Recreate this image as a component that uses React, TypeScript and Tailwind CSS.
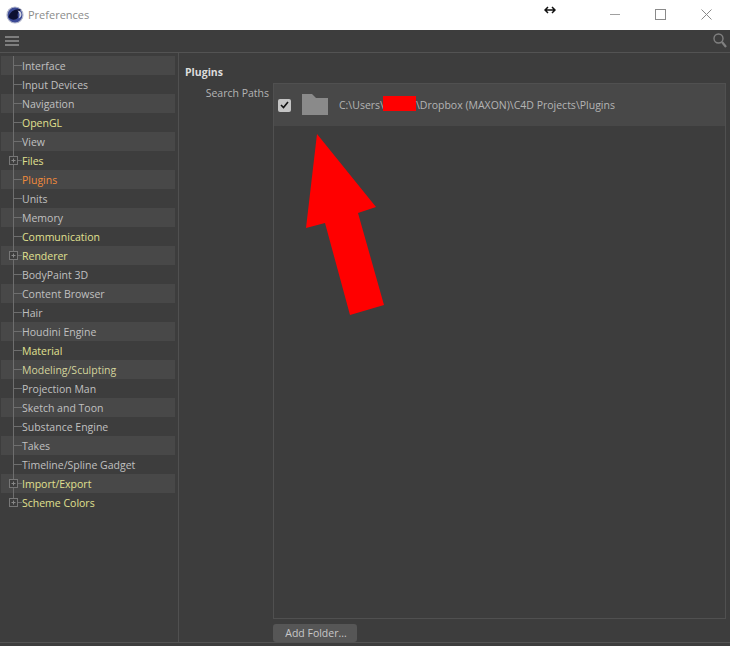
const items: [string, string, boolean?][] = [
  ["Interface", "text-[#c0c0c0]"],
  ["Input Devices", "text-[#c0c0c0]"],
  ["Navigation", "text-[#c0c0c0]"],
  ["OpenGL", "text-[#e0e090]"],
  ["View", "text-[#c0c0c0]"],
  ["Files", "text-[#e0e090]", true],
  ["Plugins", "text-[#f08a3c]"],
  ["Units", "text-[#c0c0c0]"],
  ["Memory", "text-[#c0c0c0]"],
  ["Communication", "text-[#e0e090]"],
  ["Renderer", "text-[#e0e090]", true],
  ["BodyPaint 3D", "text-[#c0c0c0]"],
  ["Content Browser", "text-[#c0c0c0]"],
  ["Hair", "text-[#c0c0c0]"],
  ["Houdini Engine", "text-[#c0c0c0]"],
  ["Material", "text-[#e0e090]"],
  ["Modeling/Sculpting", "text-[#d4d49c]"],
  ["Projection Man", "text-[#c0c0c0]"],
  ["Sketch and Toon", "text-[#c0c0c0]"],
  ["Substance Engine", "text-[#c0c0c0]"],
  ["Takes", "text-[#c0c0c0]"],
  ["Timeline/Spline Gadget", "text-[#c0c0c0]"],
  ["Import/Export", "text-[#e0e090]", true],
  ["Scheme Colors", "text-[#e0e090]", true],
];

function Row({ label, color, plus, striped, last }: { label: string; color: string; plus?: boolean; striped: boolean; last: boolean }) {
  return (
    <div className={`h-[19px] w-[174px] flex items-center text-[10.5px] leading-[19px] whitespace-nowrap ${striped ? "bg-[#484848]" : ""}`}>
      <svg width="21" height="19" viewBox="0 0 21 19" className="shrink-0">
        <path d={last ? "M12.5 0V9.5" : "M12.5 0V19"} stroke="#6e6e6e" fill="none" />
        <path d="M12.5 9.5H21" stroke="#6e6e6e" fill="none" />
        {plus && (
          <>
            <rect x="8.5" y="5.5" width="8" height="8" fill="#3d3d3d" stroke="#777" />
            <path d="M10.5 9.5H14.5M12.5 7.5V11.5" stroke="#888" fill="none" />
          </>
        )}
      </svg>
      <span className={`${color} mt-[2px]`}>{label}</span>
    </div>
  );
}

export default function App() {
  return (
    <div className="relative w-[730px] h-[646px] overflow-hidden flex flex-col bg-[#3d3d3d] font-['Open_Sans','Noto_Sans',sans-serif]">
      <div className="h-[30px] bg-white flex items-center shrink-0">
        <svg width="18" height="18" viewBox="0 0 18 18" className="ml-[6px] -mt-[1px]">
          <circle cx="9" cy="9" r="8" fill="#3c4a96" />
          <circle cx="9" cy="9" r="8" fill="none" stroke="#b4b8cc" strokeWidth="1.2" />
          <path d="M2.5 11C4 5.5 9 2.5 15 3.5 12 5 11 8 12 11.5 9.5 14.5 5.5 14.5 2.5 11Z" fill="#0d1030" />
          <path d="M11.5 4.5A4.5 4.5 0 0 1 15.5 9 4.5 4.5 0 0 1 12.5 12.5 6 6 0 0 0 11.5 4.5Z" fill="#d4d6e0" />
        </svg>
        <span className="ml-[4px] text-[11px] text-[#8b8b8b]">Preferences</span>
        <div className="ml-auto flex items-center -mt-[2px]">
          <div className="w-[10px] h-[1px] bg-[#a0a0a0] mr-[35px]" />
          <div className="w-[11px] h-[11px] border border-[#8a8a8a] mr-[35px]" />
          <svg width="11" height="11" viewBox="0 0 11 11" className="mr-[18px]">
            <path d="M0.5 0.5L10.5 10.5M10.5 0.5L0.5 10.5" stroke="#8a8a8a" fill="none" />
          </svg>
        </div>
      </div>

      <div className="h-[23px] shrink-0 border-b border-[#535353] flex items-center justify-between">
        <div className="ml-[5px] w-[14px] flex flex-col gap-[2px]">
          <div className="h-[2px] bg-[#7e7e7e]" />
          <div className="h-[2px] bg-[#7e7e7e]" />
          <div className="h-[2px] bg-[#7e7e7e]" />
        </div>
        <svg width="14" height="16" viewBox="0 0 14 16" className="mr-[3px] mt-[-1px]">
          <circle cx="5.5" cy="5.5" r="4.5" fill="none" stroke="#808080" strokeWidth="1.4" />
          <path d="M9 9L13 14" stroke="#808080" strokeWidth="2.2" />
        </svg>
      </div>

      <div className="flex flex-1 min-h-0">
        <div className="w-[179px] shrink-0 border-r border-[#505050] pl-px pt-[3px]">
          {items.map(([label, color, plus], i) => (
            <Row key={label} label={label} color={color} plus={plus} striped={i % 2 === 0} last={i === items.length - 1} />
          ))}
        </div>
        <div className="flex-1 pl-[6px] pt-[11px]">
          <div className="text-[10.5px] leading-[16px] font-bold text-[#dcdcdc]">Plugins</div>
          <div className="flex mt-[3px]">
            <div className="w-[84px] text-right text-[10.5px] leading-[16px] text-[#b4b4b4] shrink-0 pt-[2px]">Search Paths</div>
            <div className="ml-[4px] flex flex-col">
              <div className="w-[453px] h-[536px] border border-[#505050]">
                <div className="h-[42px] bg-[#484848] flex items-center">
                  <div className="ml-[4px] w-[13px] h-[13px] rounded-[2px] bg-[#c4c4c4] flex items-center justify-center">
                    <svg width="9" height="8" viewBox="0 0 9 8">
                      <path d="M1 4L3.5 6.5L8 1" stroke="#111" strokeWidth="1.6" fill="none" />
                    </svg>
                  </div>
                  <svg width="26" height="22" viewBox="0 0 26 22" className="ml-[11px]">
                    <path d="M0 0H10L14 4H26V21H0Z" fill="#8a8a8a" />
                  </svg>
                  <span className="ml-[11px] text-[10.5px] text-[#b4b4b4] whitespace-nowrap">
                    C:\Users\<span className="inline-block w-[33px] -ml-[1px] h-[15px] bg-[#ff0000] align-[-2px]" />\Dropbox (MAXON)\C4D Projects\Plugins
                  </span>
                </div>
              </div>
              <div className="mt-[5px] w-[84px] h-[18px] rounded-[3px] bg-[#565656] pl-[2px] text-[10.5px] leading-[18px] text-center text-[#c8c8c8]">Add Folder...</div>
            </div>
          </div>
        </div>
      </div>
      <div className="h-[4px] shrink-0 border-t border-[#535353]" />

      <svg width="110" height="200" viewBox="290 120 110 200" className="absolute left-[290px] top-[120px]">
        <polygon points="317,134 376,207 358,213 384,305 350,315 325,223 306,228" fill="#ff0000" />
      </svg>
      <svg width="12" height="8" viewBox="0 0 12 8" className="absolute left-[544px] top-[6px]">
        <path d="M1 4H11M4 1L1 4L4 7M8 1L11 4L8 7" stroke="#111" strokeWidth="1.5" fill="none" />
      </svg>
    </div>
  );
}
